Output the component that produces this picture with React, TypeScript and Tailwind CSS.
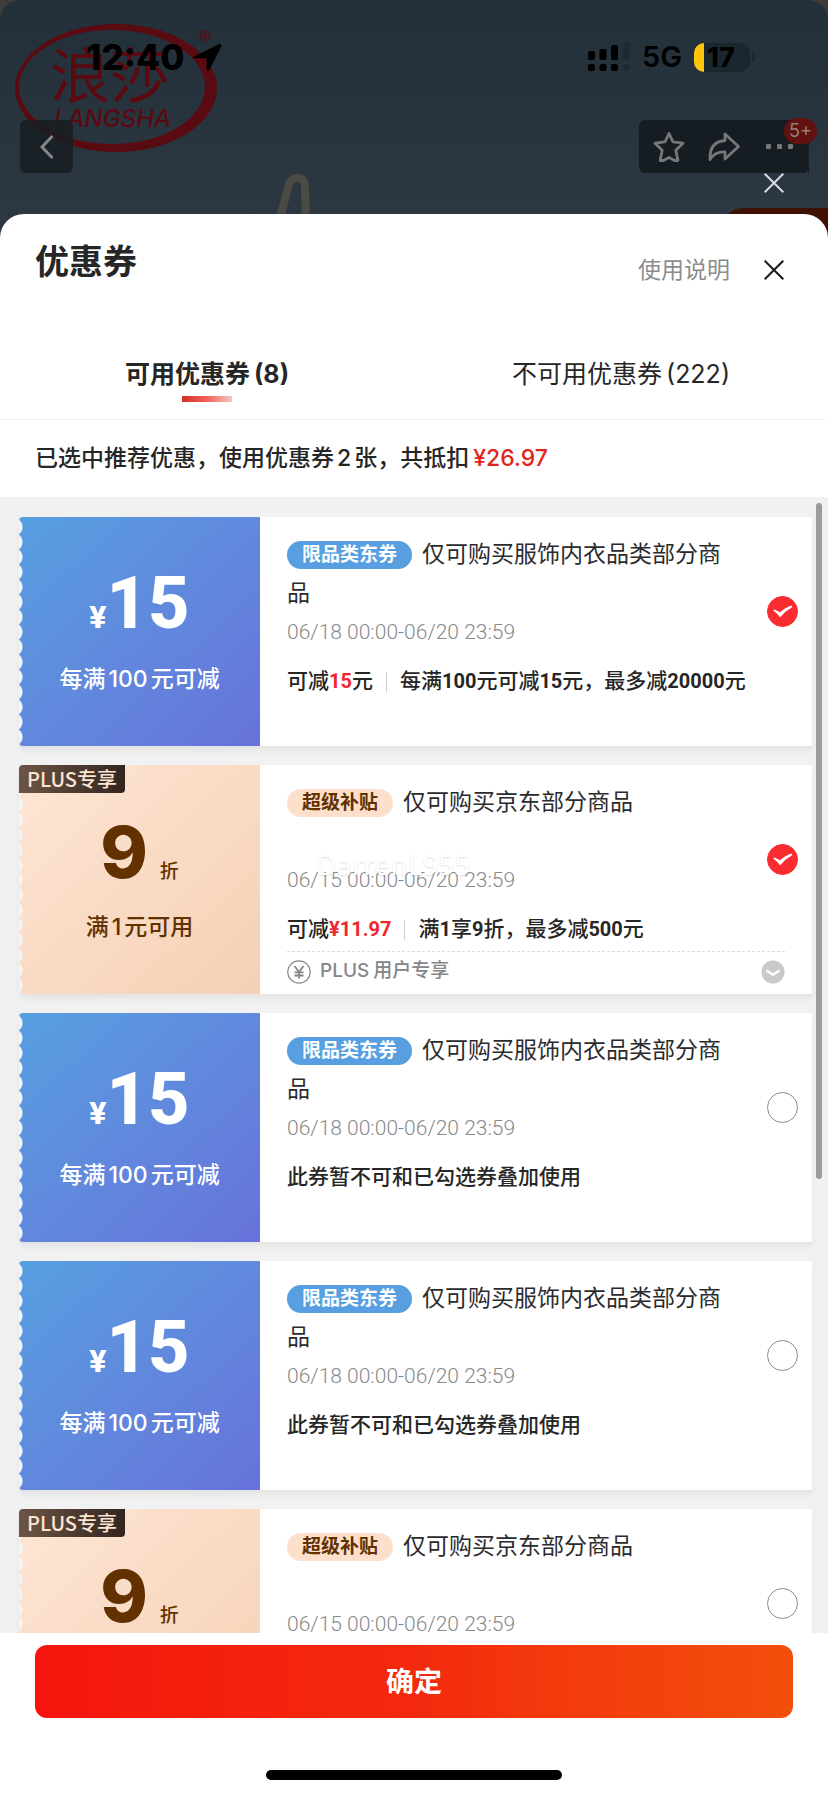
import { useState } from 'react';

interface Coupon {
  id: number;
  kind: 'category' | 'plus';
  title: string;
  period: string;
  saving?: string;
  rule?: string;
  note?: string;
  plusRow?: boolean;
}

const COUPONS: Coupon[] = [
  {
    id: 1,
    kind: 'category',
    title: '仅可购买服饰内衣品类部分商品',
    period: '06/18 00:00-06/20 23:59',
    saving: '15',
    rule: '每满100元可减15元，最多减20000元',
  },
  {
    id: 2,
    kind: 'plus',
    title: '仅可购买京东部分商品',
    period: '06/15 00:00-06/20 23:59',
    saving: '¥11.97',
    rule: '满1享9折，最多减500元',
    plusRow: true,
  },
  {
    id: 3,
    kind: 'category',
    title: '仅可购买服饰内衣品类部分商品',
    period: '06/18 00:00-06/20 23:59',
    note: '此券暂不可和已勾选券叠加使用',
  },
  {
    id: 4,
    kind: 'category',
    title: '仅可购买服饰内衣品类部分商品',
    period: '06/18 00:00-06/20 23:59',
    note: '此券暂不可和已勾选券叠加使用',
  },
  {
    id: 5,
    kind: 'plus',
    title: '仅可购买京东部分商品',
    period: '06/15 00:00-06/20 23:59',
  },
];

function CloseIcon() {
  return (
    <svg viewBox="0 0 20 20" className="w-5 h-5" fill="none" stroke="currentColor" strokeWidth="2">
      <path d="M0.7 0.7 19.3 19.3M19.3 0.7 0.7 19.3" />
    </svg>
  );
}

function BrandLogo() {
  return (
    <svg viewBox="0 0 220 160" className="absolute left-0 top-0 w-[220px] h-[160px]" fill="#5a0a11">
      <path
        fillRule="evenodd"
        d="M15 88a101 64 0 1 0 202 0a101 64 0 1 0 -202 0ZM19 87a93 57 0 1 0 186 0a93 57 0 1 0 -186 0Z"
      />
      <text x="50" y="98" fontSize="60" fontWeight="400" className="font-['Noto_Sans_CJK_SC',sans-serif]">
        浪莎
      </text>
      <text x="54" y="127" fontSize="24" fontStyle="italic" fontWeight="500" className="font-[Inter,sans-serif]">
        LANGSHA
      </text>
      <text x="199" y="44" fontSize="19" className="font-[Inter,sans-serif]">
        ®
      </text>
    </svg>
  );
}

function StatusBar() {
  return (
    <div className="relative flex items-center justify-between h-[42px] pl-[86px] pr-[73px] text-black">
      <div className="flex items-center gap-2">
        <span className="text-[35px] leading-[42px] font-extrabold">12:40</span>
        <svg viewBox="0 0 30 30" className="w-[30px] h-[30px]" fill="currentColor">
          <path d="M2 14.5 26.5 2.2c2-1 3.6.6 2.7 2.6L17.600 27.600c-1 2-3 1.600-3-.6V16.300H2.700C.6 16.300.2 15.300 2 14.500Z" />
        </svg>
      </div>
      <div className="flex items-center">
        <svg viewBox="0 0 43 30" className="w-[43px] h-[30px]" fill="currentColor">
          <rect x="0" y="9" width="7" height="9" rx="2" />
          <rect x="11.500" y="7" width="7" height="11" rx="2" />
          <rect x="23" y="3" width="7" height="15" rx="2" />
          <rect x="0" y="22" width="7" height="7" rx="2" />
          <rect x="11.500" y="22" width="7" height="7" rx="2" />
          <rect x="23" y="22" width="7" height="7" rx="2" />
          <rect x="35" y="0" width="7" height="18" rx="2" fill="#1e2a32" />
          <rect x="35" y="22" width="7" height="7" rx="2" fill="#1e2a32" />
        </svg>
        <span className="ml-[11px] text-[29px] leading-[42px] font-semibold">5G</span>
        <div className="ml-[12px] flex items-center w-[56px] h-[29px] rounded-[10px] overflow-hidden bg-[#1b272e]">
          <span className="w-[10px] h-full bg-[#ffc60a]" />
          <span className="ml-[3px] text-[27px] leading-[29px] font-extrabold">17</span>
        </div>
        <span className="ml-[2px] w-[3px] h-[9px] rounded-r bg-[#1b272e]" />
      </div>
    </div>
  );
}

function Header() {
  return (
    <header className="relative shrink-0 h-[240px] pt-9 bg-[#403c3a]">
      <div className="absolute inset-0 rounded-t-[20px] overflow-hidden bg-linear-to-b from-[#22303a] to-[#2d3842]">
        <BrandLogo />
        <svg viewBox="0 0 40 50" className="absolute left-[274px] top-[172px] w-10 h-[50px]" fill="none" stroke="#4c4a44" strokeWidth="8">
          <path d="M5 50 15 12Q17 6 24 6 30 6 31 14L32 50" />
        </svg>
        <div className="absolute right-0 top-[208px] w-[108px] h-8 rounded-tl-[24px] bg-[#3f1203]" />
      </div>
      <StatusBar />
      <nav className="relative flex justify-between mt-[42px] pl-5 pr-[19px] text-[#77777a]">
        <button type="button" aria-label="返回" className="grid place-items-center w-[53px] h-[53px] rounded-md bg-[#161d22]/85">
          <svg viewBox="0 0 14 24" className="w-[14px] h-6" fill="none" stroke="#85868a" strokeWidth="3">
            <path d="M12.500 1 2 12l10.500 11" />
          </svg>
        </button>
        <div className="relative flex w-[170px] h-[53px] rounded-md bg-[#151c22] divide-x divide-[#181f26]">
          <button type="button" aria-label="收藏" className="grid flex-1 place-items-center">
            <svg viewBox="0 0 32 32" className="w-8 h-8 ml-1" fill="none" stroke="currentColor" strokeWidth="2.800" strokeLinejoin="round">
              <path d="M16 2.500 20 10.800 30 12.200 22.800 19.200 24.900 29.500H21.500L16 26.500 10.500 29.500H7.100L9.200 19.200 2 12.200 12 10.800Z" />
            </svg>
          </button>
          <button type="button" aria-label="分享" className="grid flex-1 place-items-center">
            <svg viewBox="0 0 34 32" className="w-[34px] h-8" fill="none" stroke="currentColor" strokeWidth="2.800" strokeLinejoin="round">
              <path d="M18 3 31.500 15.500 18 28V21C11 20.500 6.500 23 3 28.500 2.500 18.500 6.500 10.500 18 9.500Z" />
            </svg>
          </button>
          <button type="button" aria-label="更多" className="grid flex-1 place-items-center">
            <svg viewBox="0 0 28 6" className="w-7 h-[6px]" fill="currentColor">
              <rect x="0" width="5" height="5" rx="1" />
              <rect x="11" width="5" height="5" rx="1" />
              <rect x="22" width="5" height="5" rx="1" />
            </svg>
          </button>
          <span className="absolute -top-[2px] -right-2 w-[33px] h-[26px] rounded-full bg-[#611110] text-center text-[18px] leading-[26px] text-[#93827f]">
            5+
          </span>
        </div>
      </nav>
      <button type="button" aria-label="关闭页面" className="absolute right-11 top-[173px] text-[#d4dae8]">
        <CloseIcon />
      </button>
    </header>
  );
}

function Stub({ kind }: { kind: Coupon['kind'] }) {
  const plus = kind === 'plus';
  return (
    <div
      className={`relative shrink-0 w-[241px] pt-[45px] rounded-l-[4px] overflow-hidden text-center ${
        plus
          ? 'bg-linear-to-br from-[#fee6d4] to-[#f4d0b5] text-[#633100]'
          : 'bg-linear-to-br from-[#569fe0] to-[#6772da] text-white'
      }`}
    >
      <span className="absolute left-0 top-[3px] bottom-[1px] w-1 bg-[radial-gradient(circle_at_-6px_7px,#f1f5f8_9px,transparent_10px)] bg-[length:4px_15px] bg-repeat-y" />
      {plus && (
        <span className="absolute left-0 top-0 h-7 px-2 rounded-br-[4px] bg-linear-to-r from-[#6d5546] to-[#33261f] text-[20px] leading-7 font-medium text-[#fce3d0] font-['Noto_Sans_CJK_SC',sans-serif]">
          PLUS专享
        </span>
      )}
      {plus ? (
        <p className="flex items-baseline justify-center gap-3 h-[84px] leading-[84px]">
          <span className="text-[72px] font-extrabold">9</span>
          <span className="text-[19px] font-medium">折</span>
        </p>
      ) : (
        <p className="flex items-baseline justify-center h-[84px] font-extrabold leading-[84px] font-[Roboto,'Noto_Sans_CJK_SC',sans-serif]">
          <span className="text-[32px]">¥</span>
          <span className="text-[72px]">15</span>
        </p>
      )}
      <p className="mt-[17px] text-[23px] leading-8 font-medium">
        {plus ? '满' : '每满'}
        <span className="mx-[3px]">{plus ? '1' : '100'}</span>
        {plus ? '元可用' : '元可减'}
      </p>
    </div>
  );
}

interface CouponCardProps {
  coupon: Coupon;
  checked: boolean;
  onToggle: () => void;
}

function CouponCard({ coupon, checked, onToggle }: CouponCardProps) {
  const plus = coupon.kind === 'plus';
  return (
    <li className="relative flex h-[229px] bg-white rounded-l-[4px] shadow-[0_5px_5px_rgba(0,0,0,0.05)]">
      <Stub kind={coupon.kind} />
      <div className="flex-1 px-[27px] pt-[18px]">
        <h2 className="min-h-[78px] mr-12 text-[23px] leading-[39px] text-[#2b2b2d]">
          <span
            className={`inline-block h-7 mr-[10px] px-[15px] rounded-full align-middle -translate-y-px text-[19px] leading-7 font-bold ${
              plus ? 'bg-[#fde0cb] text-[#633100]' : 'bg-[#579fe1] text-white'
            }`}
          >
            {plus ? '超级补贴' : '限品类东券'}
          </span>
          {coupon.title}
        </h2>
        <p className="text-[21px] leading-[38px] font-light text-[#88898c] font-[Roboto,sans-serif]">{coupon.period}</p>
        <div className="flex items-center h-[42px] mt-[10px] text-[21px] font-medium text-[#262626] font-[Roboto,'Noto_Sans_CJK_SC',sans-serif]">
          {coupon.saving ? (
            <>
              <span>
                可减<b className="text-[20px] text-[#f2272d]">{coupon.saving}</b>
                {!plus && '元'}
              </span>
              <span className="w-px h-5 mx-[13px] bg-[#cfcfcf]" />
              <span>
                {coupon.rule?.split(/(\d+)/).map((part, i) => (i % 2 ? <b key={i} className="text-[20px]">{part}</b> : part))}
              </span>
            </>
          ) : (
            <span>{coupon.note}</span>
          )}
        </div>
        {coupon.plusRow && (
          <div className="flex items-center h-10 border-t border-dashed border-[#dedede] text-[#85868a]">
            <svg viewBox="0 0 24 24" className="w-6 h-6" fill="none" stroke="currentColor" strokeWidth="1.200">
              <circle cx="12" cy="12" r="11.200" />
              <path strokeWidth="1.800" d="M7.500 6 12 12l4.500-6M12 12v6.500M7.500 12.300h9M7.500 15.500h9" />
            </svg>
            <span className="ml-[9px] text-[19px] font-medium">
              PLUS<span className="ml-1">用户专享</span>
            </span>
            <button type="button" aria-label="展开" className="ml-auto">
              <svg viewBox="0 0 24 24" className="w-6 h-6">
                <circle cx="12" cy="12" r="11.500" fill="#c9c9c9" />
                <path d="M5.500 10.500 12 14.700l6.500-4.200" fill="none" stroke="#fff" strokeWidth="2.500" />
              </svg>
            </button>
          </div>
        )}
      </div>
      <label className="absolute right-[14px] top-[79px] w-[31px] h-[31px]">
        <input
          type="checkbox"
          checked={checked}
          onChange={onToggle}
          aria-label={coupon.title}
          className="peer block appearance-none w-[31px] h-[31px] rounded-full border border-[#8c8c8c] checked:border-[#fb2c30] checked:bg-[#fb2c30]"
        />
        <svg viewBox="0 0 31 31" className="absolute inset-0 hidden peer-checked:block" fill="#fff">
          <path d="M6 14.300 7.500 13.500 13 16.300Q18 11.500 24.300 9.500L25.300 11Q18.500 15 13.200 21.200Q10 17.500 6 14.300Z" />
        </svg>
      </label>
    </li>
  );
}

export default function App() {
  const [selected, setSelected] = useState<number[]>([1, 2]);
  const [tab, setTab] = useState<'usable' | 'unusable'>('usable');

  const toggle = (id: number): void => {
    setSelected(prev => (prev.includes(id) ? prev.filter(item => item !== id) : [...prev, id]));
  };

  const tabs = [
    { key: 'usable' as const, label: '可用优惠券', count: 8 },
    { key: 'unusable' as const, label: '不可用优惠券', count: 222 },
  ];

  return (
    <div className="flex flex-col h-screen overflow-hidden bg-white font-[Inter,'Noto_Sans_CJK_SC',sans-serif]">
      <Header />
      <main className="relative flex flex-col flex-1 min-h-0 -mt-[26px] rounded-t-[24px] bg-white">
        <div className="flex justify-between h-[118px] pl-[35px] pr-11 pt-6">
          <h1 className="text-[34px] leading-[48px] font-bold text-[#262626]">优惠券</h1>
          <div className="flex items-center gap-[34px] h-16">
            <button type="button" className="text-[23px] text-[#8c8c8c]">使用说明</button>
            <button type="button" aria-label="关闭" className="text-[#1a1a1a]">
              <CloseIcon />
            </button>
          </div>
        </div>

        <div role="tablist" className="grid grid-cols-2 h-[88px] border-b border-[#f3f3f3]">
          {tabs.map(({ key, label, count }) => (
            <button
              key={key}
              type="button"
              role="tab"
              aria-selected={tab === key}
              onClick={() => setTab(key)}
              className={`flex flex-col items-center pt-6 text-[25px] leading-9 text-[#262626] ${tab === key ? 'font-bold' : ''}`}
            >
              <span>
                {label}
                <span className="ml-1">({count})</span>
              </span>
              {tab === key && (
                <span className="w-[50px] h-[6px] mt-1 bg-linear-to-r from-[#d42a22] via-[#f0625b] to-[#f3c4c1]" />
              )}
            </button>
          ))}
        </div>

        <p className="h-[77px] pl-[35px] text-[23px] leading-[77px] font-medium text-[#262626]">
          已选中推荐优惠，使用优惠券<span className="mx-[3px]">{selected.length}</span>张，共抵扣
          <span className="ml-1 text-[#e1251b]">¥26.97</span>
        </p>

        <section className="relative flex-1 min-h-0 bg-[#f1f1f1]">
          <ul className="flex flex-col gap-[19px] h-full pl-[19px] pr-4 pt-5 overflow-y-auto [scrollbar-width:none] *:shrink-0">
            {COUPONS.map(coupon => (
              <CouponCard
                key={coupon.id}
                coupon={coupon}
                checked={selected.includes(coupon.id)}
                onToggle={() => toggle(coupon.id)}
              />
            ))}
          </ul>
          <span className="absolute left-[316px] top-[349px] text-[28px] leading-9 text-white pointer-events-none font-['Open_Sans',sans-serif] [text-shadow:0_1px_2px_rgba(0,0,0,0.14)]">
            DarrenL955
          </span>
          <span className="absolute right-[6px] top-[6px] w-[6px] h-[59.5%] rounded-full bg-[#9b9b9b]" />
        </section>

        <footer className="px-[35px] pt-3 pb-[15px]">
          <button
            type="button"
            className="block w-full h-[73px] rounded-[12px] bg-linear-to-r from-[#f5140e] via-[#f3290d] to-[#f34e0c] text-[28px] font-bold text-white"
          >
            确定
          </button>
          <div className="w-[296px] h-[10px] mt-[52px] mx-auto rounded-full bg-black" />
        </footer>
      </main>
    </div>
  );
}
